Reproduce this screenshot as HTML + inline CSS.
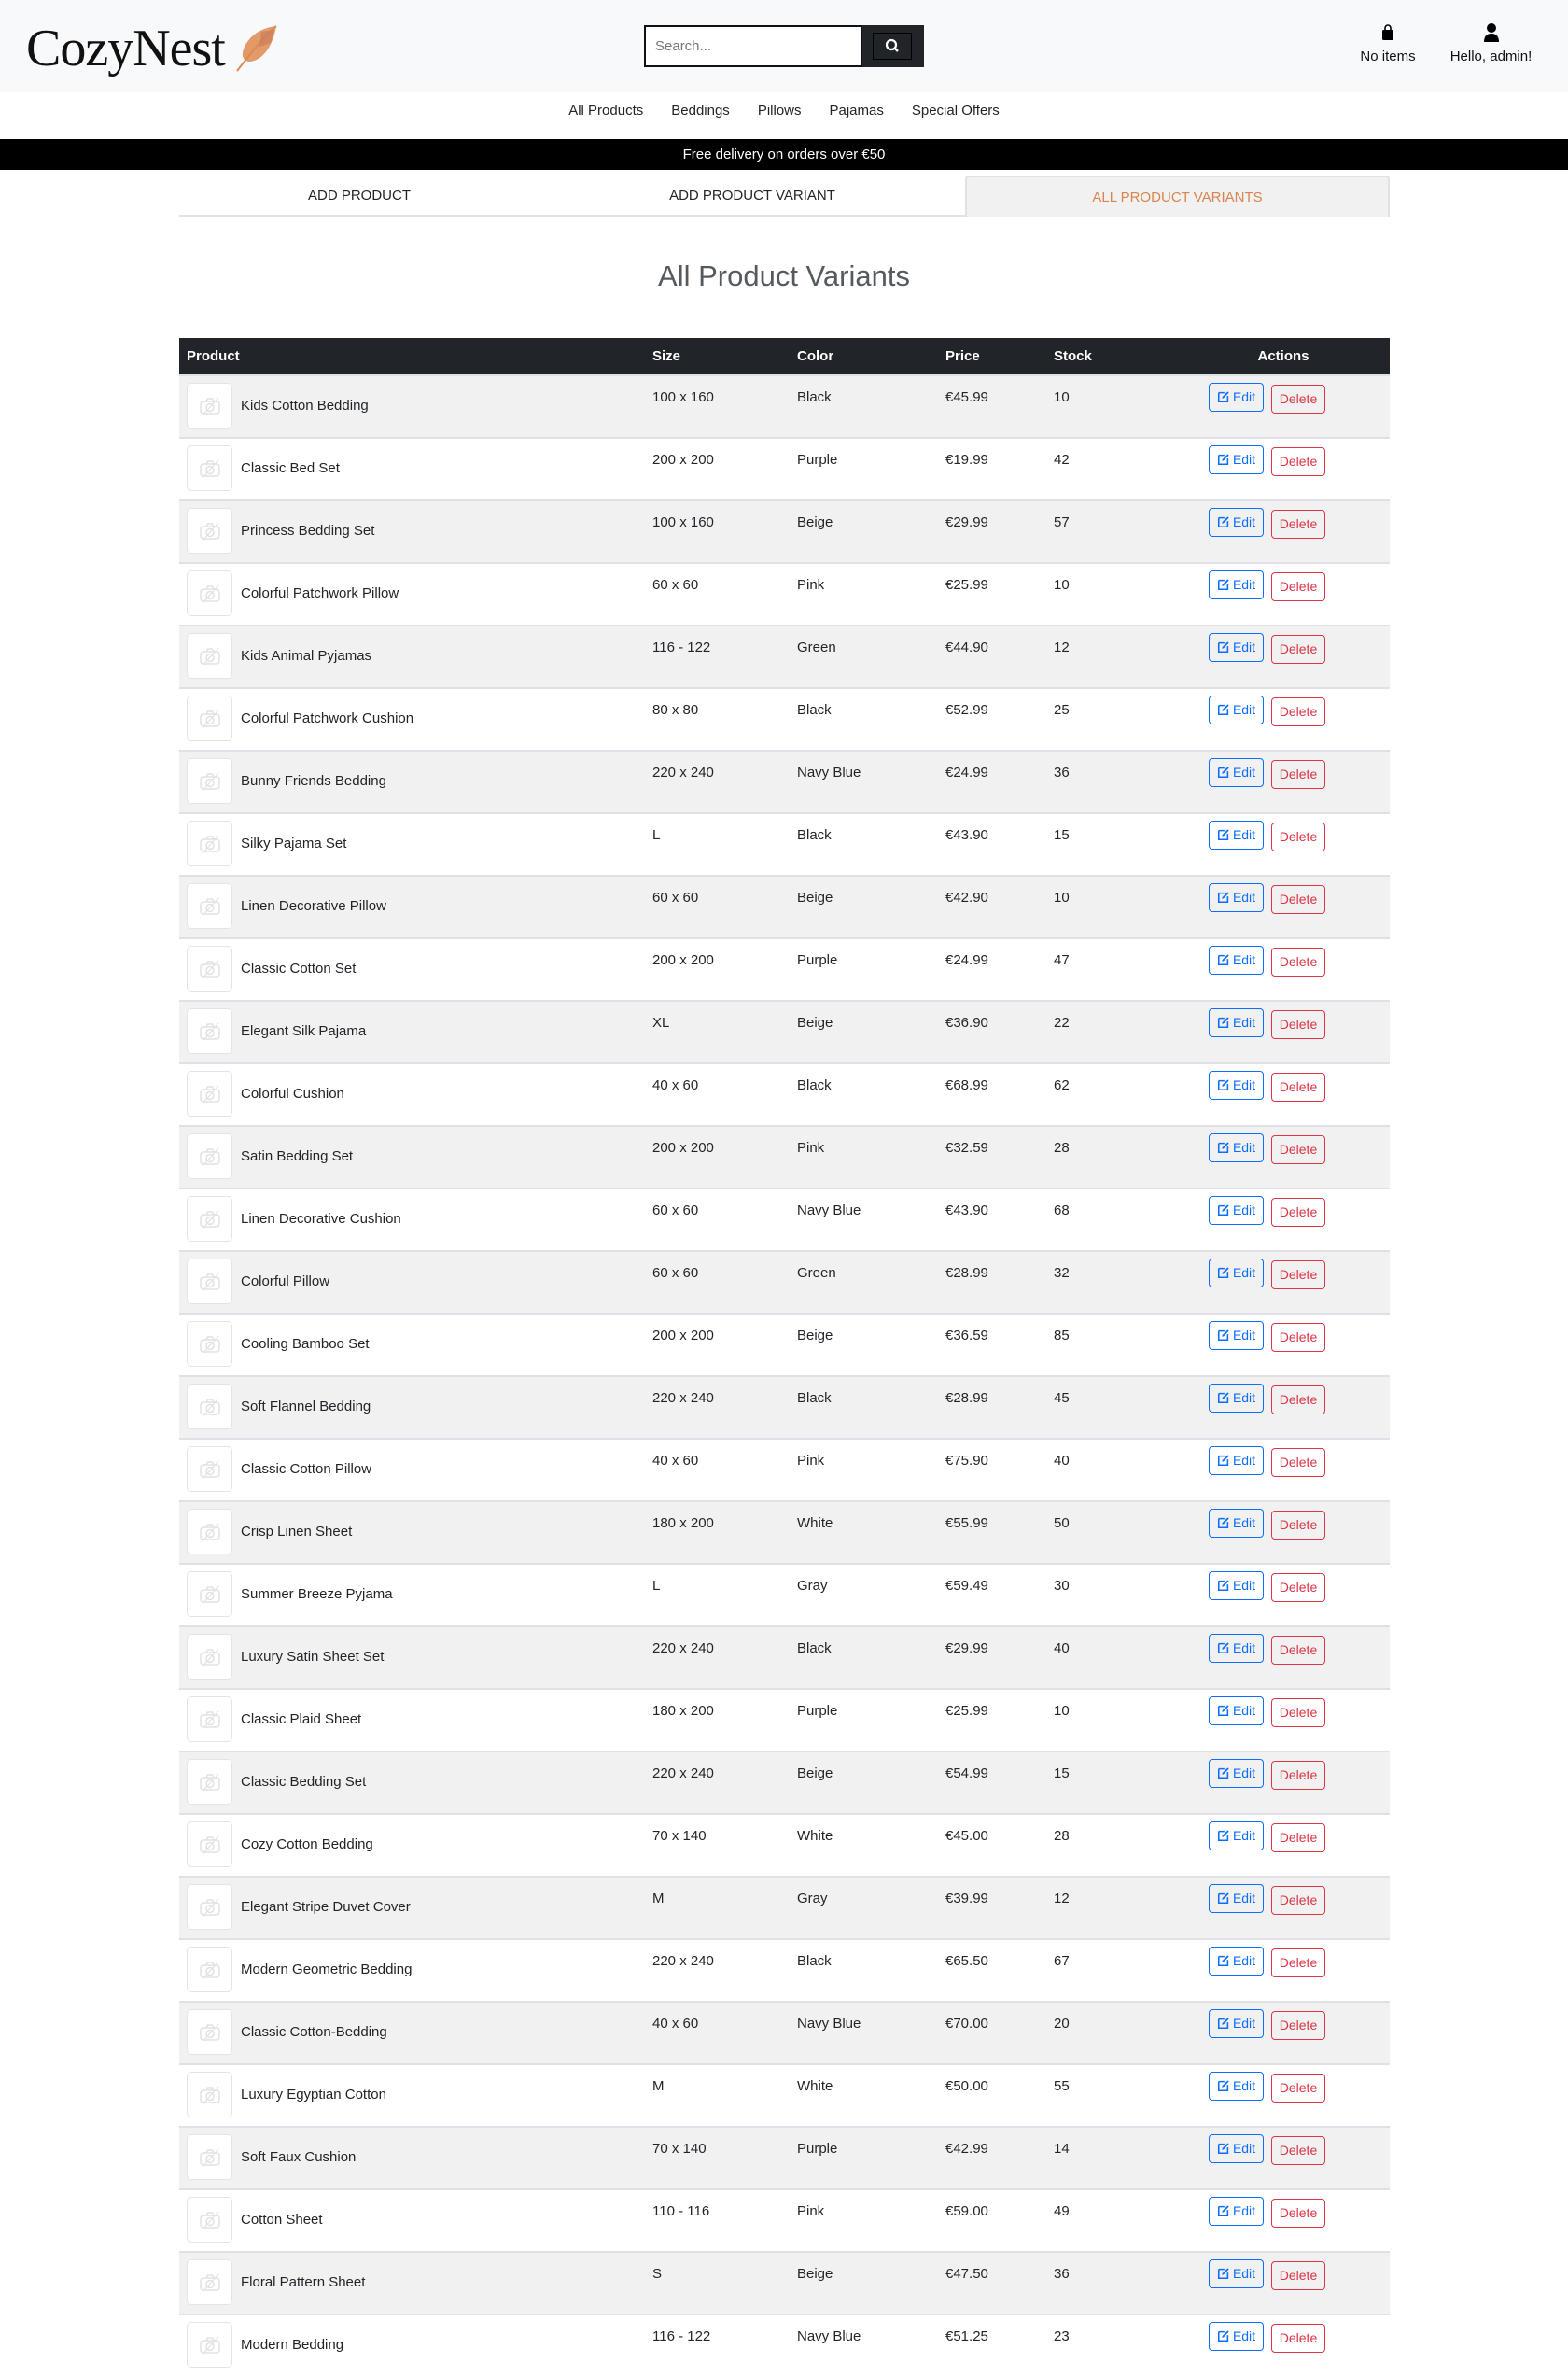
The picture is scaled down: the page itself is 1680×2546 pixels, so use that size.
<!DOCTYPE html>
<html><head><meta charset="utf-8"><style>
*{box-sizing:border-box;margin:0;padding:0}
body{width:1680px;height:2520px;overflow:hidden;background:#fff;font-family:"Liberation Sans",sans-serif;color:#212529;position:relative}
.hdr{position:absolute;left:0;top:0;width:1680px;height:99px;background:#f8f9fa}
.logo{position:absolute;left:28px;top:20px;font-family:"Liberation Serif",serif;font-size:56px;letter-spacing:-1px;color:#111}
.search{position:absolute;left:690px;top:27px;width:235px;height:45px;border:2px solid #111;background:#fff;font-size:15px;color:#777;padding:12px 10px}
.sbtn{position:absolute;left:924px;top:27px;width:66px;height:45px;background:#212529}
.sbtn div{position:absolute;left:11px;top:8px;width:42px;height:29px;border:1px solid #000}
.ic{position:absolute;text-align:center;font-size:15px;color:#111}
.nav{position:absolute;top:110px;left:0;width:1680px;text-align:center;font-size:15px}
.nav span{margin:0 15px}
.bar{position:absolute;left:0;top:149px;width:1680px;height:33px;background:#000;color:#fff;text-align:center;font-size:15px;line-height:33px}
.tabs{position:absolute;left:192px;top:188px;width:1297px;height:44px}
.tab{position:absolute;top:0;height:44px;line-height:44px;text-align:center;font-size:15px;border-bottom:2px solid #e2e2e2}
h1{position:absolute;top:278px;left:0;width:1680px;text-align:center;font-weight:normal;font-size:31px;color:#555a5e}
table{position:absolute;left:192px;top:362px;width:1297px;border-collapse:collapse;font-size:15px}
th{background:#212529;color:#fff;height:40px;text-align:left;font-weight:bold;padding:0 0 0 8px}
td{height:67px;vertical-align:top;padding:14px 0 0 8px;border-top:2px solid #dee2e6}
tr:nth-child(even) td{background:#f1f1f1}
td.p{padding:7px 0 0 8px}
.pw{display:flex;align-items:center}
.th{width:49px;height:49px;border:1px solid #e4e4e4;border-radius:5px;background:#fff;margin-right:9px;position:relative}
.th svg{position:absolute;left:13px;top:14px}
td.a{padding:7px 0 0 34px;text-align:left}
.e,.d{display:inline-block;font-size:14px;border-radius:4px;vertical-align:top;text-align:center}
.e{width:59px;height:31px;line-height:29px;border:1.5px solid #0d6efd;color:#0d6efd}
.e svg{vertical-align:-2px;margin-right:3px}
.d{width:58px;height:31px;line-height:29px;border:1.5px solid #dc3545;color:#dc3545;margin:2px 0 0 8px}
</style></head><body>
<div class="hdr">
<div class="logo">CozyNest</div>
<svg style="position:absolute;left:250px;top:26px" width="50" height="52" viewBox="0 0 50 52"><path d="M46 2 C28 4 14 14 10 30 C9 36 12 40 18 40 C32 38 42 24 46 2Z" fill="#e29a68"/><path d="M46 2 C36 10 24 24 4 50" stroke="#d98a55" stroke-width="2" fill="none"/><path d="M30 8 L44 6 L40 20 L28 24Z" fill="#c87a5a" opacity=".6"/></svg>
<div class="search">Search...</div>
<div class="sbtn"><div><svg width="40" height="27" viewBox="0 0 40 27"><circle cx="19" cy="12" r="5" stroke="#fff" stroke-width="2.2" fill="none"/><path d="M22.5 15.5 L26 19" stroke="#fff" stroke-width="2.5"/></svg></div></div>
<div class="ic" style="left:1448px;top:26px;width:78px"><svg width="14" height="18" viewBox="0 0 14 18"><path d="M4 6 V4 a3 3 0 0 1 6 0 V6" stroke="#000" stroke-width="1.6" fill="none"/><rect x="1" y="6" width="12" height="11" rx="1.5" fill="#000"/></svg><div style="margin-top:4px">No items</div></div>
<div class="ic" style="left:1545px;top:24px;width:105px"><svg width="18" height="22" viewBox="0 0 18 22"><circle cx="9" cy="6" r="5" fill="#000"/><path d="M1 21 C1 14 5 12 9 12 C13 12 17 14 17 21Z" fill="#000"/></svg><div style="margin-top:2px">Hello, admin!</div></div>
</div>
<div class="nav"><span>All Products</span><span>Beddings</span><span>Pillows</span><span>Pajamas</span><span>Special Offers</span></div>
<div class="bar">Free delivery on orders over €50</div>
<div class="tabs">
<div class="tab" style="left:0;width:386px">ADD PRODUCT</div>
<div class="tab" style="left:386px;width:456px">ADD PRODUCT VARIANT</div>
<div class="tab" style="left:842px;width:455px;background:#f1f1f1;color:#d9844f;border:2px solid #e2e2e2;border-bottom:none;border-radius:4px 4px 0 0">ALL PRODUCT VARIANTS</div>
</div>
<h1>All Product Variants</h1>
<svg width="0" height="0" style="position:absolute"><defs>
<symbol id="cam" viewBox="0 0 22 20"><rect x="1" y="5" width="20" height="13" rx="3" fill="none" stroke="#e2e2e2" stroke-width="1.5"/><circle cx="11" cy="11.5" r="4" fill="none" stroke="#e2e2e2" stroke-width="1.5"/><path d="M7 5 L8.5 2 H13.5 L15 5" fill="none" stroke="#e2e2e2" stroke-width="1.5"/><path d="M3 20 L20 1" stroke="#e2e2e2" stroke-width="1.2"/></symbol>
<symbol id="pen" viewBox="0 0 16 16"><path d="M2 3 H9 M2 3 V14 H13 V7" fill="none" stroke="#0d6efd" stroke-width="1.8"/><path d="M6 10 L6.5 8 L13 1.5 L14.5 3 L8 9.5Z" fill="#0d6efd"/></symbol>
</defs></svg>
<table>
<colgroup><col style="width:499px"><col style="width:155px"><col style="width:159px"><col style="width:116px"><col style="width:140px"><col></colgroup>
<tr><th>Product</th><th>Size</th><th>Color</th><th>Price</th><th>Stock</th><th style="text-align:center;padding:0">Actions</th></tr>
<tr><td class="p"><div class="pw"><div class="th"><svg width="22" height="20"><use href="#cam"/></svg></div>Kids Cotton Bedding</div></td><td>100 x 160</td><td>Black</td><td>€45.99</td><td>10</td><td class="a"><span class="e"><svg width="14" height="14"><use href="#pen"/></svg>Edit</span><span class="d">Delete</span></td></tr>
<tr><td class="p"><div class="pw"><div class="th"><svg width="22" height="20"><use href="#cam"/></svg></div>Classic Bed Set</div></td><td>200 x 200</td><td>Purple</td><td>€19.99</td><td>42</td><td class="a"><span class="e"><svg width="14" height="14"><use href="#pen"/></svg>Edit</span><span class="d">Delete</span></td></tr>
<tr><td class="p"><div class="pw"><div class="th"><svg width="22" height="20"><use href="#cam"/></svg></div>Princess Bedding Set</div></td><td>100 x 160</td><td>Beige</td><td>€29.99</td><td>57</td><td class="a"><span class="e"><svg width="14" height="14"><use href="#pen"/></svg>Edit</span><span class="d">Delete</span></td></tr>
<tr><td class="p"><div class="pw"><div class="th"><svg width="22" height="20"><use href="#cam"/></svg></div>Colorful Patchwork Pillow</div></td><td>60 x 60</td><td>Pink</td><td>€25.99</td><td>10</td><td class="a"><span class="e"><svg width="14" height="14"><use href="#pen"/></svg>Edit</span><span class="d">Delete</span></td></tr>
<tr><td class="p"><div class="pw"><div class="th"><svg width="22" height="20"><use href="#cam"/></svg></div>Kids Animal Pyjamas</div></td><td>116 - 122</td><td>Green</td><td>€44.90</td><td>12</td><td class="a"><span class="e"><svg width="14" height="14"><use href="#pen"/></svg>Edit</span><span class="d">Delete</span></td></tr>
<tr><td class="p"><div class="pw"><div class="th"><svg width="22" height="20"><use href="#cam"/></svg></div>Colorful Patchwork Cushion</div></td><td>80 x 80</td><td>Black</td><td>€52.99</td><td>25</td><td class="a"><span class="e"><svg width="14" height="14"><use href="#pen"/></svg>Edit</span><span class="d">Delete</span></td></tr>
<tr><td class="p"><div class="pw"><div class="th"><svg width="22" height="20"><use href="#cam"/></svg></div>Bunny Friends Bedding</div></td><td>220 x 240</td><td>Navy Blue</td><td>€24.99</td><td>36</td><td class="a"><span class="e"><svg width="14" height="14"><use href="#pen"/></svg>Edit</span><span class="d">Delete</span></td></tr>
<tr><td class="p"><div class="pw"><div class="th"><svg width="22" height="20"><use href="#cam"/></svg></div>Silky Pajama Set</div></td><td>L</td><td>Black</td><td>€43.90</td><td>15</td><td class="a"><span class="e"><svg width="14" height="14"><use href="#pen"/></svg>Edit</span><span class="d">Delete</span></td></tr>
<tr><td class="p"><div class="pw"><div class="th"><svg width="22" height="20"><use href="#cam"/></svg></div>Linen Decorative Pillow</div></td><td>60 x 60</td><td>Beige</td><td>€42.90</td><td>10</td><td class="a"><span class="e"><svg width="14" height="14"><use href="#pen"/></svg>Edit</span><span class="d">Delete</span></td></tr>
<tr><td class="p"><div class="pw"><div class="th"><svg width="22" height="20"><use href="#cam"/></svg></div>Classic Cotton Set</div></td><td>200 x 200</td><td>Purple</td><td>€24.99</td><td>47</td><td class="a"><span class="e"><svg width="14" height="14"><use href="#pen"/></svg>Edit</span><span class="d">Delete</span></td></tr>
<tr><td class="p"><div class="pw"><div class="th"><svg width="22" height="20"><use href="#cam"/></svg></div>Elegant Silk Pajama</div></td><td>XL</td><td>Beige</td><td>€36.90</td><td>22</td><td class="a"><span class="e"><svg width="14" height="14"><use href="#pen"/></svg>Edit</span><span class="d">Delete</span></td></tr>
<tr><td class="p"><div class="pw"><div class="th"><svg width="22" height="20"><use href="#cam"/></svg></div>Colorful Cushion</div></td><td>40 x 60</td><td>Black</td><td>€68.99</td><td>62</td><td class="a"><span class="e"><svg width="14" height="14"><use href="#pen"/></svg>Edit</span><span class="d">Delete</span></td></tr>
<tr><td class="p"><div class="pw"><div class="th"><svg width="22" height="20"><use href="#cam"/></svg></div>Satin Bedding Set</div></td><td>200 x 200</td><td>Pink</td><td>€32.59</td><td>28</td><td class="a"><span class="e"><svg width="14" height="14"><use href="#pen"/></svg>Edit</span><span class="d">Delete</span></td></tr>
<tr><td class="p"><div class="pw"><div class="th"><svg width="22" height="20"><use href="#cam"/></svg></div>Linen Decorative Cushion</div></td><td>60 x 60</td><td>Navy Blue</td><td>€43.90</td><td>68</td><td class="a"><span class="e"><svg width="14" height="14"><use href="#pen"/></svg>Edit</span><span class="d">Delete</span></td></tr>
<tr><td class="p"><div class="pw"><div class="th"><svg width="22" height="20"><use href="#cam"/></svg></div>Colorful Pillow</div></td><td>60 x 60</td><td>Green</td><td>€28.99</td><td>32</td><td class="a"><span class="e"><svg width="14" height="14"><use href="#pen"/></svg>Edit</span><span class="d">Delete</span></td></tr>
<tr><td class="p"><div class="pw"><div class="th"><svg width="22" height="20"><use href="#cam"/></svg></div>Cooling Bamboo Set</div></td><td>200 x 200</td><td>Beige</td><td>€36.59</td><td>85</td><td class="a"><span class="e"><svg width="14" height="14"><use href="#pen"/></svg>Edit</span><span class="d">Delete</span></td></tr>
<tr><td class="p"><div class="pw"><div class="th"><svg width="22" height="20"><use href="#cam"/></svg></div>Soft Flannel Bedding</div></td><td>220 x 240</td><td>Black</td><td>€28.99</td><td>45</td><td class="a"><span class="e"><svg width="14" height="14"><use href="#pen"/></svg>Edit</span><span class="d">Delete</span></td></tr>
<tr><td class="p"><div class="pw"><div class="th"><svg width="22" height="20"><use href="#cam"/></svg></div>Classic Cotton Pillow</div></td><td>40 x 60</td><td>Pink</td><td>€75.90</td><td>40</td><td class="a"><span class="e"><svg width="14" height="14"><use href="#pen"/></svg>Edit</span><span class="d">Delete</span></td></tr>
<tr><td class="p"><div class="pw"><div class="th"><svg width="22" height="20"><use href="#cam"/></svg></div>Crisp Linen Sheet</div></td><td>180 x 200</td><td>White</td><td>€55.99</td><td>50</td><td class="a"><span class="e"><svg width="14" height="14"><use href="#pen"/></svg>Edit</span><span class="d">Delete</span></td></tr>
<tr><td class="p"><div class="pw"><div class="th"><svg width="22" height="20"><use href="#cam"/></svg></div>Summer Breeze Pyjama</div></td><td>L</td><td>Gray</td><td>€59.49</td><td>30</td><td class="a"><span class="e"><svg width="14" height="14"><use href="#pen"/></svg>Edit</span><span class="d">Delete</span></td></tr>
<tr><td class="p"><div class="pw"><div class="th"><svg width="22" height="20"><use href="#cam"/></svg></div>Luxury Satin Sheet Set</div></td><td>220 x 240</td><td>Black</td><td>€29.99</td><td>40</td><td class="a"><span class="e"><svg width="14" height="14"><use href="#pen"/></svg>Edit</span><span class="d">Delete</span></td></tr>
<tr><td class="p"><div class="pw"><div class="th"><svg width="22" height="20"><use href="#cam"/></svg></div>Classic Plaid Sheet</div></td><td>180 x 200</td><td>Purple</td><td>€25.99</td><td>10</td><td class="a"><span class="e"><svg width="14" height="14"><use href="#pen"/></svg>Edit</span><span class="d">Delete</span></td></tr>
<tr><td class="p"><div class="pw"><div class="th"><svg width="22" height="20"><use href="#cam"/></svg></div>Classic Bedding Set</div></td><td>220 x 240</td><td>Beige</td><td>€54.99</td><td>15</td><td class="a"><span class="e"><svg width="14" height="14"><use href="#pen"/></svg>Edit</span><span class="d">Delete</span></td></tr>
<tr><td class="p"><div class="pw"><div class="th"><svg width="22" height="20"><use href="#cam"/></svg></div>Cozy Cotton Bedding</div></td><td>70 x 140</td><td>White</td><td>€45.00</td><td>28</td><td class="a"><span class="e"><svg width="14" height="14"><use href="#pen"/></svg>Edit</span><span class="d">Delete</span></td></tr>
<tr><td class="p"><div class="pw"><div class="th"><svg width="22" height="20"><use href="#cam"/></svg></div>Elegant Stripe Duvet Cover</div></td><td>M</td><td>Gray</td><td>€39.99</td><td>12</td><td class="a"><span class="e"><svg width="14" height="14"><use href="#pen"/></svg>Edit</span><span class="d">Delete</span></td></tr>
<tr><td class="p"><div class="pw"><div class="th"><svg width="22" height="20"><use href="#cam"/></svg></div>Modern Geometric Bedding</div></td><td>220 x 240</td><td>Black</td><td>€65.50</td><td>67</td><td class="a"><span class="e"><svg width="14" height="14"><use href="#pen"/></svg>Edit</span><span class="d">Delete</span></td></tr>
<tr><td class="p"><div class="pw"><div class="th"><svg width="22" height="20"><use href="#cam"/></svg></div>Classic Cotton-Bedding</div></td><td>40 x 60</td><td>Navy Blue</td><td>€70.00</td><td>20</td><td class="a"><span class="e"><svg width="14" height="14"><use href="#pen"/></svg>Edit</span><span class="d">Delete</span></td></tr>
<tr><td class="p"><div class="pw"><div class="th"><svg width="22" height="20"><use href="#cam"/></svg></div>Luxury Egyptian Cotton</div></td><td>M</td><td>White</td><td>€50.00</td><td>55</td><td class="a"><span class="e"><svg width="14" height="14"><use href="#pen"/></svg>Edit</span><span class="d">Delete</span></td></tr>
<tr><td class="p"><div class="pw"><div class="th"><svg width="22" height="20"><use href="#cam"/></svg></div>Soft Faux Cushion</div></td><td>70 x 140</td><td>Purple</td><td>€42.99</td><td>14</td><td class="a"><span class="e"><svg width="14" height="14"><use href="#pen"/></svg>Edit</span><span class="d">Delete</span></td></tr>
<tr><td class="p"><div class="pw"><div class="th"><svg width="22" height="20"><use href="#cam"/></svg></div>Cotton Sheet</div></td><td>110 - 116</td><td>Pink</td><td>€59.00</td><td>49</td><td class="a"><span class="e"><svg width="14" height="14"><use href="#pen"/></svg>Edit</span><span class="d">Delete</span></td></tr>
<tr><td class="p"><div class="pw"><div class="th"><svg width="22" height="20"><use href="#cam"/></svg></div>Floral Pattern Sheet</div></td><td>S</td><td>Beige</td><td>€47.50</td><td>36</td><td class="a"><span class="e"><svg width="14" height="14"><use href="#pen"/></svg>Edit</span><span class="d">Delete</span></td></tr>
<tr><td class="p"><div class="pw"><div class="th"><svg width="22" height="20"><use href="#cam"/></svg></div>Modern Bedding</div></td><td>116 - 122</td><td>Navy Blue</td><td>€51.25</td><td>23</td><td class="a"><span class="e"><svg width="14" height="14"><use href="#pen"/></svg>Edit</span><span class="d">Delete</span></td></tr>
</table>
</body></html>
